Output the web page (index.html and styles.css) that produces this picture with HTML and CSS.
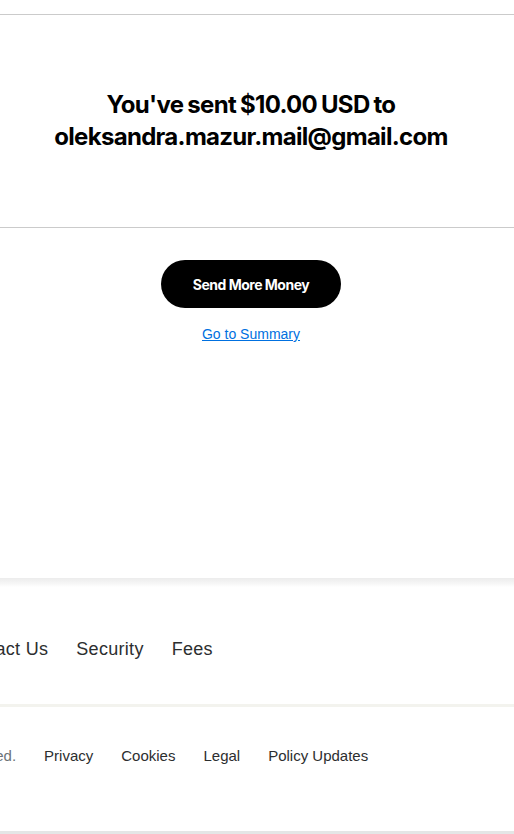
FILE: index.html
```html
<!DOCTYPE html>
<html lang="en">
<head>
<meta charset="utf-8">
<title>Payment sent</title>
<link rel="stylesheet" href="styles.css">
</head>
<body>
<div class="page">
  <header class="topbar"></header>
  <section class="result">
    <h1 class="result-title">You've sent $10.00 USD to<br>oleksandra.mazur.mail@gmail.com</h1>
  </section>
  <section class="actions">
    <a class="btn-primary" href="#">Send More Money</a>
    <a class="link" href="#">Go to Summary</a>
  </section>
  <footer class="footer">
    <nav class="footer-main">
      <a href="#">Help</a>
      <a href="#">Contact Us</a>
      <a href="#">Security</a>
      <a href="#">Fees</a>
    </nav>
    <div class="footer-legal">
      <span class="copy">© 1999–2024 PayPal, Inc. All rights reserved.</span>
      <a href="#">Privacy</a>
      <a href="#">Cookies</a>
      <a href="#">Legal</a>
      <a href="#">Policy Updates</a>
    </div>
  </footer>
</div>
</body>
</html>
```

FILE: styles.css
```css
html, body {
  margin: 0;
  padding: 0;
  background: #ffffff;
  overflow: hidden;
}
body {
  font-family: "Liberation Sans", Arial, sans-serif;
  color: #000;
}
.page {
  width: 514px;
  height: 834px;
  display: flex;
  flex-direction: column;
}
.topbar {
  height: 14px;
  border-bottom: 1px solid #cbcbcb;
  flex: none;
}
.result {
  height: 212px;
  border-bottom: 1px solid #cbcbcb;
  display: flex;
  align-items: center;
  justify-content: center;
  padding-right: 12px;
  flex: none;
}
.result-title {
  margin: 0;
  font-family: Inter, "Liberation Sans", sans-serif;
  font-weight: 700;
  font-size: 24px;
  line-height: 32px;
  letter-spacing: -0.7px;
  word-spacing: -1px;
  text-align: center;
  color: #000;
}
.actions {
  display: flex;
  flex-direction: column;
  align-items: center;
  padding-top: 32px;
  padding-right: 12px;
  flex: 1;
}
.btn-primary {
  display: flex;
  align-items: center;
  justify-content: center;
  width: 180px;
  height: 48px;
  border-radius: 24px;
  background: #000;
  color: #fff;
  text-decoration: none;
  font-family: Inter, "Liberation Sans", sans-serif;
  font-weight: 700;
  font-size: 14px;
  letter-spacing: -0.5px;
}
.link {
  margin-top: 18px;
  font-family: "Liberation Sans", Arial, sans-serif;
  font-size: 14px;
  color: #0070e0;
  text-decoration: underline;
}
.footer {
  flex: none;
  box-sizing: border-box;
  height: 256px;
  padding-top: 9px;
  background: linear-gradient(to bottom, #ececec 0, #f7f7f7 6px, #ffffff 9px);
  display: flex;
  flex-direction: column;
  border-bottom: 3px solid #e4e6e6;
}
.footer-main {
  background: #fff;
  height: 120px;
  display: flex;
  align-items: center;
  gap: 28px;
  padding-top: 8px;
  box-sizing: border-box;
  border-bottom: 3px solid #f3f3ee;
  flex: none;
}
.footer-main a, .footer-legal a {
  color: #2c2e2f;
  text-decoration: none;
  white-space: nowrap;
}
.footer-main a {
  font-size: 18px;
  letter-spacing: 0.3px;
}
.footer-main a:first-child {
  margin-left: -110px;
}
.footer-legal {
  background: #fff;
  flex: 1;
  display: flex;
  align-items: flex-start;
  padding-top: 40px;
  gap: 28px;
  font-size: 15px;
}
.copy {
  color: #6c7378;
  white-space: nowrap;
  margin-left: -286px;
}
```
